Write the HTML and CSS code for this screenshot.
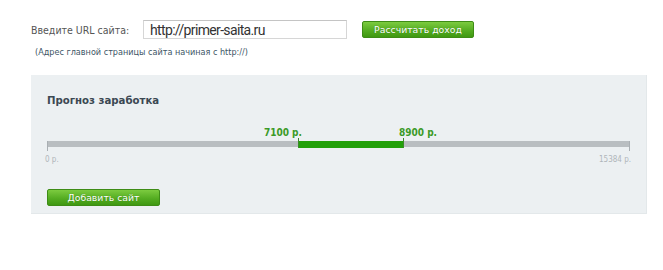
FILE: index.html
```html
<!DOCTYPE html>
<html lang="ru">
<head>
  <meta charset="UTF-8">
  <title>Прогноз заработка</title>
  <link rel="stylesheet" href="styles.css">
</head>
<body>

<div class="calc">
  <div class="calc-row">
    <label class="calc-label" for="url">Введите URL сайта:</label>
    <input class="calc-input" id="url" type="text" value="http://primer-saita.ru">
    <button class="btn btn-calc">Рассчитать доход</button>
  </div>
  <p class="calc-hint">(Адрес главной страницы сайта начиная с http://)</p>
</div>

<div class="forecast">
  <h2>Прогноз заработка</h2>
  <div class="scale">
    <div class="scale-bar">
      <div class="scale-range" style="left:43.05%; width:17.84%;">
        <span class="range-low">7100 р.</span>
        <span class="range-high">8900 р.</span>
      </div>
    </div>
    <div class="scale-ends">
      <span>0 р.</span>
      <span>15384 р.</span>
    </div>
  </div>
  <button class="btn btn-add">Добавить сайт</button>
</div>

</body>
</html>
```

FILE: styles.css
```css
body {
  margin: 0;
  background: #fff;
  font-family: "DejaVu Sans", Verdana, sans-serif;
  font-stretch: condensed;
}
.calc {
  padding: 20px 0 0 31px;
}
.calc-row {
  display: flex; align-items: center;
}
.calc-label {
  width: 112px;
  font-size: 10.5px; color: #555;
}
.calc-input {
  width: 196px; height: 17px;
  margin: 0 15px 0 0; padding: 0 0 0 6px;
  border: 1px solid #d6d6d6; border-top-color: #c4c4c4;
  font-family: Roboto, sans-serif; font-size: 14px; letter-spacing: -0.65px; color: #333;
  outline: none;
}
.calc-hint {
  margin: 8px 0 0 4px;
  font-size: 9px; color: #3d5666;
}
.btn {
  display: block;
  height: 17px; padding: 0;
  border: 1px solid #3e8c16; border-radius: 2px;
  background: linear-gradient(#7ccb3f, #55ad22 55%, #3f9812);
  color: #fff; font-family: inherit; font-size: 9.3px;
  text-shadow: 0 0 1px rgba(0,60,0,0.4);
  cursor: pointer;
}
.btn-calc {
  width: 112px;
}
.forecast {
  margin: 18px 0 0 31px; width: 583px;
  padding: 18px 16px 7px 16px;
  background: #ecf0f2;
  border-right: 1px solid #e3e8ea; border-bottom: 1px solid #e3e8ea;
}
.forecast h2 {
  margin: 0;
  font-size: 11.3px; line-height: 15px; color: #3b4852;
}
.scale {
  padding-top: 33px;
}
.scale-bar {
  position: relative;
  height: 6px; background: #b9bec1;
}
.scale-bar::before,
.scale-bar::after {
  content: ""; position: absolute; top: 0;
  width: 1px; height: 10px; background: #a9afb3;
}
.scale-bar::before { left: 0; }
.scale-bar::after { right: 0; }
.scale-range {
  position: absolute; top: 0; height: 7px;
  background: #22a00a;
  border-left: 1px solid #3c8a2a; border-right: 1px solid #3c8a2a;
}
.scale-range::before,
.scale-range::after {
  content: ""; position: absolute; top: -3px;
  width: 1px; height: 3px; background: #3c8a2a;
}
.scale-range::before { left: -1px; }
.scale-range::after { right: -1px; }
.range-low,
.range-high {
  position: absolute; bottom: 10px;
  font-size: 10px; font-weight: bold; color: #3b9a28;
  white-space: nowrap;
}
.range-low { right: 100%; margin-right: -3px; }
.range-high { left: 100%; margin-left: -4px; }
.scale-ends {
  display: flex; justify-content: space-between;
  margin: 8px -1px 0 -2px;
  font-size: 8px; line-height: 10px; color: #b0b6ba;
}
.btn-add {
  width: 113px; margin-top: 24px;
}
```
